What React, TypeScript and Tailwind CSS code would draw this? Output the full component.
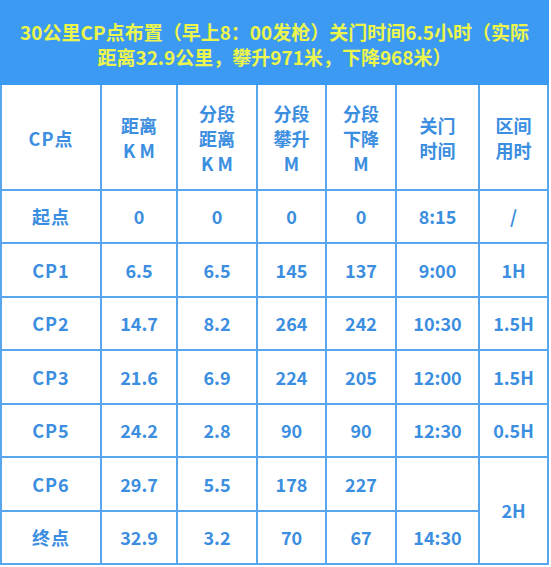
const headers = [
  ["CP点"],
  ["距离", "K M"],
  ["分段", "距离", "K M"],
  ["分段", "攀升", "M"],
  ["分段", "下降", "M"],
  ["关门", "时间"],
  ["区间", "用时"],
];

const rows = [
  ["起点", "0", "0", "0", "0", "8:15", "/"],
  ["CP1", "6.5", "6.5", "145", "137", "9:00", "1H"],
  ["CP2", "14.7", "8.2", "264", "242", "10:30", "1.5H"],
  ["CP3", "21.6", "6.9", "224", "205", "12:00", "1.5H"],
  ["CP5", "24.2", "2.8", "90", "90", "12:30", "0.5H"],
];

const cell =
  "bg-white flex items-center justify-center text-[#3b8ee0] text-[18px] font-bold";

export default function App() {
  return (
    <div
      className="w-[551px] h-[567px] bg-white overflow-hidden"
      style={{ fontFamily: '"Noto Sans CJK SC", "Noto Sans", sans-serif' }}
    >
      {/* title bar */}
      <div className="w-[549px] h-[85px] bg-[#3d9af2] flex flex-col items-center justify-center pt-[3px] text-[#ecf54c] text-[19px] font-bold leading-[25px]">
        <div>30公里CP点布置（早上8：00发枪）关门时间6.5小时（实际</div>
        <div>距离32.9公里，攀升971米，下降968米）</div>
      </div>

      {/* table */}
      <div className="w-[549px] grid grid-cols-[98px_74px_78px_67px_68px_81px_67px] grid-rows-[104px_51px_52px_51px_52px_51px_52px_51px] gap-[2px] px-[2px] pb-[2px] bg-[#58a6ee]">
        {headers.map((h, i) => (
          <div key={i} className={`${cell} flex-col leading-[25px] pt-[2px]`}>
            {h.map((t) => (
              <span key={t} className={i === 0 ? "tracking-[1px]" : ""}>
                {t}
              </span>
            ))}
          </div>
        ))}
        {rows.map((r) =>
          r.map((v, j) => (
            <div key={r[0] + j} className={`${cell} ${j === 0 ? "tracking-[1px]" : ""}`}>
              {v}
            </div>
          ))
        )}
        {/* CP6 */}
        <div className={`${cell} tracking-[1px]`}>CP6</div>
        <div className={cell}>29.7</div>
        <div className={cell}>5.5</div>
        <div className={cell}>178</div>
        <div className={cell}>227</div>
        <div className={cell}></div>
        <div className={`${cell} row-span-2`}>2H</div>
        {/* finish */}
        <div className={`${cell} tracking-[1px]`}>终点</div>
        <div className={cell}>32.9</div>
        <div className={cell}>3.2</div>
        <div className={cell}>70</div>
        <div className={cell}>67</div>
        <div className={cell}>14:30</div>
      </div>
    </div>
  );
}
